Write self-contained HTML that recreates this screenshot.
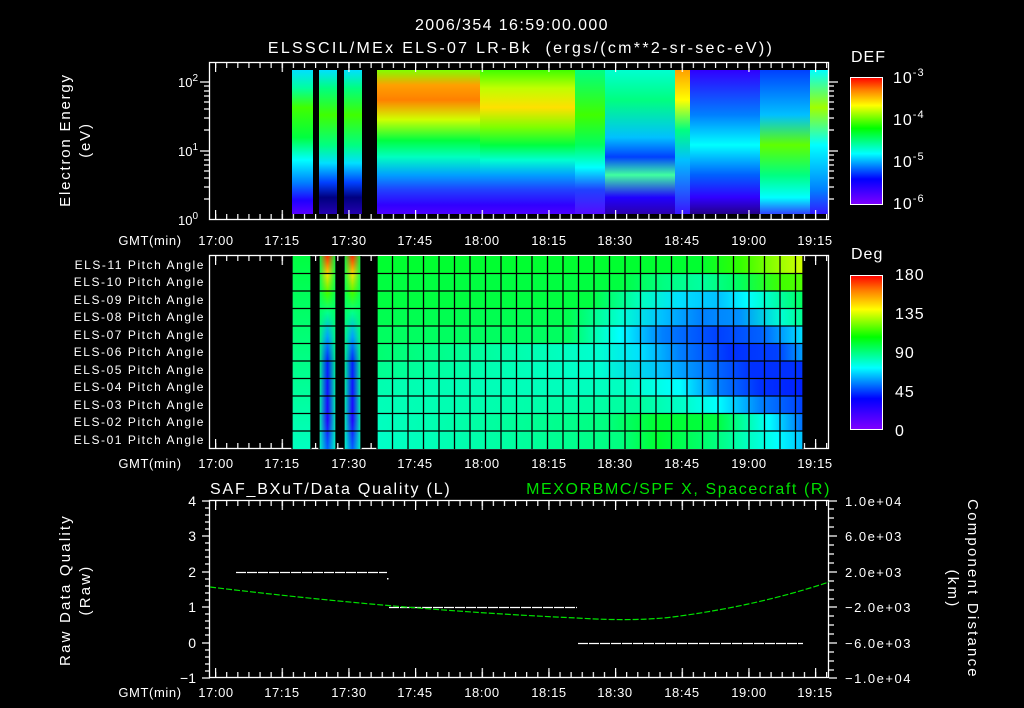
<!DOCTYPE html>
<html><head><meta charset="utf-8"><style>
html,body{margin:0;padding:0;background:#000;}
svg{display:block;}
text{font-family:"Liberation Sans",sans-serif;fill:#fff;}
</style></head><body>
<svg width="1024" height="708" viewBox="0 0 1024 708" xmlns="http://www.w3.org/2000/svg">
<defs>
<pattern id="tk" x="215" y="0" width="11.11" height="708" patternUnits="userSpaceOnUse"><rect x="0" y="0" width="1.2" height="708" fill="#fff"/></pattern>
<pattern id="tkM" x="215" y="0" width="66.67" height="708" patternUnits="userSpaceOnUse"><rect x="0" y="0" width="1.2" height="708" fill="#fff"/></pattern>
<linearGradient id="cb" x1="0" y1="1" x2="0" y2="0"><stop offset="0" stop-color="#8000ff"/><stop offset=".2" stop-color="#0000ff"/><stop offset=".4" stop-color="#00ffff"/><stop offset=".6" stop-color="#00ff00"/><stop offset=".78" stop-color="#ffff00"/><stop offset=".9" stop-color="#ff8000"/><stop offset="1" stop-color="#ff0000"/></linearGradient>
<linearGradient id="gA" x1="0" y1="70" x2="0" y2="220" gradientUnits="userSpaceOnUse"><stop offset="0" stop-color="#00e0ff"/><stop offset=".12" stop-color="#00ffa0"/><stop offset=".25" stop-color="#40ff00"/><stop offset=".45" stop-color="#00ff40"/><stop offset=".6" stop-color="#00ffff"/><stop offset=".75" stop-color="#0080ff"/><stop offset=".87" stop-color="#2000ff"/><stop offset="1" stop-color="#7000ff"/></linearGradient>
<linearGradient id="gA2" x1="0" y1="70" x2="0" y2="220" gradientUnits="userSpaceOnUse"><stop offset="0" stop-color="#00e0ff"/><stop offset=".12" stop-color="#00ff80"/><stop offset=".3" stop-color="#40ff00"/><stop offset=".5" stop-color="#00ff80"/><stop offset=".62" stop-color="#00e0ff"/><stop offset=".75" stop-color="#0040ff"/><stop offset=".85" stop-color="#000080"/><stop offset="1" stop-color="#3000c0"/></linearGradient>
<linearGradient id="gB" x1="0" y1="70" x2="0" y2="220" gradientUnits="userSpaceOnUse"><stop offset="0" stop-color="#80ff00"/><stop offset=".1" stop-color="#ffa000"/><stop offset=".2" stop-color="#ff8000"/><stop offset=".33" stop-color="#d0ff00"/><stop offset=".47" stop-color="#00ff40"/><stop offset=".58" stop-color="#00ffc0"/><stop offset=".7" stop-color="#00a0ff"/><stop offset=".8" stop-color="#2040ff"/><stop offset=".9" stop-color="#3000ff"/><stop offset="1" stop-color="#6000ff"/></linearGradient>
<linearGradient id="gB2" x1="0" y1="70" x2="0" y2="220" gradientUnits="userSpaceOnUse"><stop offset="0" stop-color="#40ff00"/><stop offset=".12" stop-color="#c0ff00"/><stop offset=".25" stop-color="#ffe000"/><stop offset=".38" stop-color="#80ff00"/><stop offset=".5" stop-color="#00ff40"/><stop offset=".6" stop-color="#00ffd0"/><stop offset=".7" stop-color="#00a0ff"/><stop offset=".8" stop-color="#2040ff"/><stop offset=".9" stop-color="#3000ff"/><stop offset="1" stop-color="#6000ff"/></linearGradient>
<linearGradient id="gC" x1="0" y1="70" x2="0" y2="220" gradientUnits="userSpaceOnUse"><stop offset="0" stop-color="#00ff80"/><stop offset=".3" stop-color="#40ff00"/><stop offset=".5" stop-color="#00ff60"/><stop offset=".65" stop-color="#00ffff"/><stop offset=".8" stop-color="#2040ff"/><stop offset="1" stop-color="#6000ff"/></linearGradient>
<linearGradient id="gD" x1="0" y1="70" x2="0" y2="220" gradientUnits="userSpaceOnUse"><stop offset="0" stop-color="#00ffd0"/><stop offset=".2" stop-color="#00ff80"/><stop offset=".45" stop-color="#00c0ff"/><stop offset=".58" stop-color="#0040ff"/><stop offset=".7" stop-color="#40ffa0"/><stop offset=".85" stop-color="#2000ff"/><stop offset="1" stop-color="#300090"/></linearGradient>
<linearGradient id="gE" x1="0" y1="70" x2="0" y2="220" gradientUnits="userSpaceOnUse"><stop offset="0" stop-color="#ffa000"/><stop offset=".2" stop-color="#ffff00"/><stop offset=".4" stop-color="#00ff80"/><stop offset=".6" stop-color="#00c0ff"/><stop offset="1" stop-color="#4000ff"/></linearGradient>
<linearGradient id="gF" x1="0" y1="70" x2="0" y2="220" gradientUnits="userSpaceOnUse"><stop offset="0" stop-color="#3000ff"/><stop offset=".3" stop-color="#0080ff"/><stop offset=".5" stop-color="#00ffff"/><stop offset=".7" stop-color="#0060ff"/><stop offset=".85" stop-color="#3000ff"/><stop offset="1" stop-color="#200060"/></linearGradient>
<linearGradient id="gG" x1="0" y1="70" x2="0" y2="220" gradientUnits="userSpaceOnUse"><stop offset="0" stop-color="#0040ff"/><stop offset=".3" stop-color="#00c0ff"/><stop offset=".5" stop-color="#60ff00"/><stop offset=".7" stop-color="#00ff80"/><stop offset=".85" stop-color="#00ffff"/><stop offset="1" stop-color="#4000ff"/></linearGradient>
<linearGradient id="gH" x1="0" y1="70" x2="0" y2="220" gradientUnits="userSpaceOnUse"><stop offset="0" stop-color="#00ffff"/><stop offset=".25" stop-color="#a0ff00"/><stop offset=".5" stop-color="#00ffff"/><stop offset=".8" stop-color="#0080ff"/><stop offset="1" stop-color="#4000ff"/></linearGradient>
<linearGradient id="r0" x1="377" x2="803" gradientUnits="userSpaceOnUse"><stop offset="0" stop-color="#00ff30"/><stop offset=".76" stop-color="#00ff30"/><stop offset=".85" stop-color="#30ff00"/><stop offset=".95" stop-color="#a0ff00"/><stop offset="1" stop-color="#d0ff00"/></linearGradient>
<linearGradient id="r1" x1="377" x2="803" gradientUnits="userSpaceOnUse"><stop offset="0" stop-color="#00ff40"/><stop offset=".57" stop-color="#00ff40"/><stop offset=".67" stop-color="#00ff80"/><stop offset=".76" stop-color="#00ffa0"/><stop offset=".85" stop-color="#00ff60"/><stop offset=".95" stop-color="#40ff00"/><stop offset="1" stop-color="#50ff00"/></linearGradient>
<linearGradient id="r2" x1="377" x2="803" gradientUnits="userSpaceOnUse"><stop offset="0" stop-color="#00ff40"/><stop offset=".5" stop-color="#00ff40"/><stop offset=".62" stop-color="#00ffc0"/><stop offset=".71" stop-color="#00e0ff"/><stop offset=".8" stop-color="#00c0ff"/><stop offset=".87" stop-color="#00ffff"/><stop offset="1" stop-color="#00ff60"/></linearGradient>
<linearGradient id="r3" x1="377" x2="803" gradientUnits="userSpaceOnUse"><stop offset="0" stop-color="#00ff50"/><stop offset=".45" stop-color="#00ff50"/><stop offset=".57" stop-color="#00ffd0"/><stop offset=".67" stop-color="#00c0ff"/><stop offset=".76" stop-color="#0080ff"/><stop offset=".85" stop-color="#0090ff"/><stop offset=".95" stop-color="#00ffd0"/><stop offset="1" stop-color="#00ff90"/></linearGradient>
<linearGradient id="r4" x1="377" x2="803" gradientUnits="userSpaceOnUse"><stop offset="0" stop-color="#00ff60"/><stop offset=".45" stop-color="#00ff60"/><stop offset=".57" stop-color="#00ffff"/><stop offset=".67" stop-color="#0080ff"/><stop offset=".8" stop-color="#0040ff"/><stop offset=".9" stop-color="#0060ff"/><stop offset="1" stop-color="#00e0ff"/></linearGradient>
<linearGradient id="r5" x1="377" x2="803" gradientUnits="userSpaceOnUse"><stop offset="0" stop-color="#00ff70"/><stop offset=".52" stop-color="#00ffd0"/><stop offset=".62" stop-color="#00e0ff"/><stop offset=".71" stop-color="#0080ff"/><stop offset=".83" stop-color="#0030ff"/><stop offset=".94" stop-color="#0040ff"/><stop offset="1" stop-color="#00a0ff"/></linearGradient>
<linearGradient id="r6" x1="377" x2="803" gradientUnits="userSpaceOnUse"><stop offset="0" stop-color="#00ff90"/><stop offset=".52" stop-color="#00ffd0"/><stop offset=".67" stop-color="#00c0ff"/><stop offset=".76" stop-color="#0080ff"/><stop offset=".88" stop-color="#0030ff"/><stop offset="1" stop-color="#0030ff"/></linearGradient>
<linearGradient id="r7" x1="377" x2="803" gradientUnits="userSpaceOnUse"><stop offset="0" stop-color="#00ffb0"/><stop offset=".57" stop-color="#00ffc0"/><stop offset=".71" stop-color="#00ffff"/><stop offset=".8" stop-color="#0080ff"/><stop offset=".9" stop-color="#0030ff"/><stop offset="1" stop-color="#0020ff"/></linearGradient>
<linearGradient id="r8" x1="377" x2="803" gradientUnits="userSpaceOnUse"><stop offset="0" stop-color="#00ffb8"/><stop offset=".62" stop-color="#00ffa0"/><stop offset=".73" stop-color="#00ffd0"/><stop offset=".8" stop-color="#00ffff"/><stop offset=".9" stop-color="#0080ff"/><stop offset="1" stop-color="#0040ff"/></linearGradient>
<linearGradient id="r9" x1="377" x2="803" gradientUnits="userSpaceOnUse"><stop offset="0" stop-color="#00ffc0"/><stop offset=".54" stop-color="#00ff80"/><stop offset=".66" stop-color="#00ff30"/><stop offset=".8" stop-color="#00ff40"/><stop offset=".92" stop-color="#00ffff"/><stop offset="1" stop-color="#0070ff"/></linearGradient>
<linearGradient id="r10" x1="377" x2="803" gradientUnits="userSpaceOnUse"><stop offset="0" stop-color="#00ffc8"/><stop offset=".57" stop-color="#00ff80"/><stop offset=".66" stop-color="#00ff30"/><stop offset=".8" stop-color="#00ff80"/><stop offset=".94" stop-color="#00ffff"/><stop offset="1" stop-color="#00c0ff"/></linearGradient>
<linearGradient id="nc" x1="0" y1="255" x2="0" y2="449" gradientUnits="userSpaceOnUse"><stop offset="0" stop-color="#ff2000"/><stop offset=".1" stop-color="#ffe000"/><stop offset=".2" stop-color="#40ff00"/><stop offset=".3" stop-color="#00ff90"/><stop offset=".42" stop-color="#00a0ff"/><stop offset=".55" stop-color="#0020ff"/><stop offset=".85" stop-color="#2000ff"/><stop offset="1" stop-color="#0060ff"/></linearGradient>
<linearGradient id="ncm" x1="0" y1="0" x2="1" y2="0"><stop offset="0" stop-color="#fff" stop-opacity="0"/><stop offset=".5" stop-color="#fff" stop-opacity="1"/><stop offset="1" stop-color="#fff" stop-opacity="0"/></linearGradient>
<mask id="mk1" maskUnits="userSpaceOnUse" x="0" y="0" width="1024" height="708"><rect x="319" y="256" width="17" height="193" fill="url(#ncm)"/><rect x="344" y="256" width="17" height="193" fill="url(#ncm)"/></mask>
<linearGradient id="ea" x1="0" y1="255" x2="0" y2="449" gradientUnits="userSpaceOnUse"><stop offset="0" stop-color="#00ff40"/><stop offset=".5" stop-color="#00ff80"/><stop offset="1" stop-color="#00ffc0"/></linearGradient>
</defs>

<!-- titles -->
<text x="512" y="30" font-size="16" letter-spacing="1.4" text-anchor="middle">2006/354 16:59:00.000</text>
<text x="521" y="53" font-size="16" letter-spacing="2.3" text-anchor="middle" xml:space="preserve">ELSSCIL/MEx ELS-07 LR-Bk  (ergs/(cm**2-sr-sec-eV))</text>

<!-- TOP PANEL -->
<rect x="292" y="70" width="21" height="144" fill="url(#gA)"/>
<rect x="319" y="70" width="18" height="144" fill="url(#gA2)"/>
<rect x="344" y="70" width="18" height="144" fill="url(#gA2)"/>
<rect x="377" y="70" width="103" height="144" fill="url(#gB)"/>
<rect x="480" y="70" width="95" height="144" fill="url(#gB2)"/>
<rect x="575" y="70" width="30" height="144" fill="url(#gC)"/>
<rect x="605" y="70" width="70" height="144" fill="url(#gD)"/>
<rect x="675" y="70" width="15" height="144" fill="url(#gE)"/>
<rect x="690" y="70" width="70" height="144" fill="url(#gF)"/>
<rect x="760" y="70" width="50" height="144" fill="url(#gG)"/>
<rect x="810" y="70" width="19" height="144" fill="url(#gH)"/>
<g fill="none" stroke="#fff" stroke-width="1.3">
<rect x="209.5" y="62.5" width="619" height="157"/>
<rect x="209.5" y="255.5" width="619" height="193"/>
<rect x="209.5" y="500.5" width="619" height="177"/>
</g>
<rect x="210" y="63" width="618" height="5" fill="url(#tk)"/>
<rect x="210" y="214" width="618" height="5" fill="url(#tk)"/>
<rect x="210" y="63" width="618" height="9" fill="url(#tkM)"/>
<rect x="210" y="210" width="618" height="9" fill="url(#tkM)"/>
<rect x="210" y="256" width="618" height="5" fill="url(#tk)"/>
<rect x="210" y="443" width="618" height="5" fill="url(#tk)"/>
<rect x="210" y="256" width="618" height="9" fill="url(#tkM)"/>
<rect x="210" y="439" width="618" height="9" fill="url(#tkM)"/>
<rect x="210" y="501" width="618" height="5" fill="url(#tk)"/>
<rect x="210" y="672" width="618" height="5" fill="url(#tk)"/>
<rect x="210" y="501" width="618" height="9" fill="url(#tkM)"/>
<rect x="210" y="668" width="618" height="9" fill="url(#tkM)"/>
<g stroke="#fff" stroke-width="1.2">
<path d="M200 82H209M200 151H209M204 130H209M204 118H209M204 109H209M204 102H209M204 96H209M204 91H209M204 86H209M204 199H209M204 187H209M204 178H209M204 171H209M204 165H209M204 160H209M204 155H209"/>
<path d="M829 82H838M829 151H838M829 130H834M829 118H834M829 109H834M829 102H834M829 96H834M829 91H834M829 86H834M829 199H834M829 187H834M829 178H834M829 171H834M829 165H834M829 160H834M829 155H834"/>
</g>
<text x="198" y="87" font-size="13" text-anchor="end">10<tspan dy="-6" font-size="10">2</tspan></text>
<text x="198" y="156" font-size="13" text-anchor="end">10<tspan dy="-6" font-size="10">1</tspan></text>
<text x="198" y="225" font-size="13" text-anchor="end">10<tspan dy="-6" font-size="10">0</tspan></text>
<text transform="translate(70,140) rotate(-90)" font-size="15" letter-spacing="1.8" text-anchor="middle">Electron Energy</text>
<text transform="translate(90,140) rotate(-90)" font-size="15" letter-spacing="1.8" text-anchor="middle">(eV)</text>

<g font-size="13" letter-spacing="0.6" text-anchor="middle">
<text x="150" y="245">GMT(min)</text>
<text x="216" y="245">17:00</text><text x="282" y="245">17:15</text><text x="349" y="245">17:30</text><text x="415" y="245">17:45</text><text x="482" y="245">18:00</text><text x="549" y="245">18:15</text><text x="615" y="245">18:30</text><text x="682" y="245">18:45</text><text x="749" y="245">19:00</text><text x="815" y="245">19:15</text>
<text x="150" y="468">GMT(min)</text>
<text x="216" y="468">17:00</text><text x="282" y="468">17:15</text><text x="349" y="468">17:30</text><text x="415" y="468">17:45</text><text x="482" y="468">18:00</text><text x="549" y="468">18:15</text><text x="615" y="468">18:30</text><text x="682" y="468">18:45</text><text x="749" y="468">19:00</text><text x="815" y="468">19:15</text>
<text x="150" y="697">GMT(min)</text>
<text x="216" y="697">17:00</text><text x="282" y="697">17:15</text><text x="349" y="697">17:30</text><text x="415" y="697">17:45</text><text x="482" y="697">18:00</text><text x="549" y="697">18:15</text><text x="615" y="697">18:30</text><text x="682" y="697">18:45</text><text x="749" y="697">19:00</text><text x="815" y="697">19:15</text>
</g>

<!-- colorbars -->
<text x="851" y="62" font-size="16" letter-spacing="1">DEF</text>
<rect x="850.5" y="77.5" width="32" height="127" fill="url(#cb)" stroke="#fff"/>
<g font-size="16" letter-spacing="1"><text x="893" y="83">10<tspan dy="-7" font-size="11">-3</tspan></text>
<text x="893" y="125">10<tspan dy="-7" font-size="11">-4</tspan></text>
<text x="893" y="167">10<tspan dy="-7" font-size="11">-5</tspan></text>
<text x="893" y="209">10<tspan dy="-7" font-size="11">-6</tspan></text></g>
<text x="851" y="259" font-size="16" letter-spacing="1">Deg</text>
<rect x="850.5" y="275.5" width="32" height="154" fill="url(#cb)" stroke="#fff"/>
<g font-size="16" letter-spacing="1"><text x="895" y="280">180</text><text x="895" y="319">135</text><text x="895" y="358">90</text><text x="895" y="397">45</text><text x="895" y="436">0</text></g>

<!-- MIDDLE PANEL -->
<rect x="292" y="256" width="19" height="193" fill="url(#ea)"/>
<rect x="319" y="256" width="17" height="193" fill="url(#ea)"/>
<rect x="344" y="256" width="17" height="193" fill="url(#ea)"/>
<g mask="url(#mk1)"><rect x="319" y="256" width="17" height="193" fill="url(#nc)"/><rect x="344" y="256" width="17" height="193" fill="url(#nc)"/></g>
<g>
<rect x="377" y="256" width="426" height="18" fill="url(#r0)"/>
<rect x="377" y="274" width="426" height="18" fill="url(#r1)"/>
<rect x="377" y="291" width="426" height="18" fill="url(#r2)"/>
<rect x="377" y="309" width="426" height="18" fill="url(#r3)"/>
<rect x="377" y="326" width="426" height="18" fill="url(#r4)"/>
<rect x="377" y="344" width="426" height="18" fill="url(#r5)"/>
<rect x="377" y="361" width="426" height="18" fill="url(#r6)"/>
<rect x="377" y="379" width="426" height="18" fill="url(#r7)"/>
<rect x="377" y="396" width="426" height="18" fill="url(#r8)"/>
<rect x="377" y="414" width="426" height="18" fill="url(#r9)"/>
<rect x="377" y="431" width="426" height="18" fill="url(#r10)"/>
</g>
<g stroke="#000" stroke-width="1.3">
<path d="M292 273.5H803M292 291H803M292 308.5H803M292 326H803M292 343.5H803M292 361H803M292 378.5H803M292 396H803M292 413.5H803M292 431H803"/>
<path d="M377 256V449M392.5 256V449M408 256V449M423.5 256V449M439 256V449M454.5 256V449M470 256V449M485.5 256V449M501 256V449M516.5 256V449M532 256V449M547.5 256V449M563 256V449M578.5 256V449M594 256V449M609.5 256V449M625 256V449M640.5 256V449M656 256V449M671.5 256V449M687 256V449M702.5 256V449M718 256V449M733.5 256V449M749 256V449M764.5 256V449M780 256V449M795.5 256V449M803 256V449M292 256V449M311 256V449M319 256V449M336 256V449M344 256V449M361 256V449"/>
</g>
<g font-size="12" letter-spacing="1.55" text-anchor="end">
<text x="205" y="269">ELS-11 Pitch Angle</text>
<text x="205" y="286">ELS-10 Pitch Angle</text>
<text x="205" y="304">ELS-09 Pitch Angle</text>
<text x="205" y="321">ELS-08 Pitch Angle</text>
<text x="205" y="339">ELS-07 Pitch Angle</text>
<text x="205" y="356">ELS-06 Pitch Angle</text>
<text x="205" y="374">ELS-05 Pitch Angle</text>
<text x="205" y="391">ELS-04 Pitch Angle</text>
<text x="205" y="409">ELS-03 Pitch Angle</text>
<text x="205" y="426">ELS-02 Pitch Angle</text>
<text x="205" y="444">ELS-01 Pitch Angle</text>
</g>

<!-- BOTTOM PANEL -->
<text x="210" y="494" font-size="16" letter-spacing="1.8">SAF_BXuT/Data Quality (L)</text>
<text x="831" y="494" font-size="16" letter-spacing="1.6" text-anchor="end" style="fill:#00e000">MEXORBMC/SPF X, Spacecraft (R)</text>
<g stroke="#fff" stroke-width="1.2">
<path d="M202 501H210M202 536H210M202 572H210M202 607H210M202 643H210M202 678H210M205 508H210M205 515H210M205 522H210M205 529H210M205 543H210M205 550H210M205 557H210M205 564H210M205 579H210M205 586H210M205 593H210M205 600H210M205 614H210M205 621H210M205 628H210M205 635H210M205 650H210M205 657H210M205 664H210M205 671H210"/>
<path d="M829 501H837M829 536H837M829 572H837M829 607H837M829 643H837M829 678H837M829 509H834M829 518H834M829 527H834M829 545H834M829 554H834M829 563H834M829 581H834M829 590H834M829 599H834M829 616H834M829 625H834M829 634H834M829 652H834M829 661H834M829 670H834"/>
</g>
<g font-size="14" text-anchor="end"><text x="196" y="506">4</text><text x="196" y="541">3</text><text x="196" y="577">2</text><text x="196" y="612">1</text><text x="196" y="648">0</text><text x="196" y="683">−1</text></g>
<g font-size="13" letter-spacing="1.5"><text x="845" y="506">1.0e+04</text><text x="845" y="541">6.0e+03</text><text x="845" y="577">2.0e+03</text><text x="845" y="612">−2.0e+03</text><text x="845" y="648">−6.0e+03</text><text x="845" y="683">−1.0e+04</text></g>
<text transform="translate(70,590) rotate(-90)" font-size="15" letter-spacing="2.2" text-anchor="middle">Raw Data Quality</text>
<text transform="translate(90,590) rotate(-90)" font-size="15" letter-spacing="2.2" text-anchor="middle">(Raw)</text>
<text transform="translate(968,589) rotate(90)" font-size="15" letter-spacing="2.2" text-anchor="middle">Component Distance</text>
<text transform="translate(948,589) rotate(90)" font-size="15" letter-spacing="2.2" text-anchor="middle">(km)</text>
<g stroke="#fff" stroke-width="1.2" stroke-dasharray="10 1">
<path d="M236 572.5H387M389 607.5H577M578 643.5H803"/>
</g>
<rect x="387" y="578" width="1.5" height="1.5" fill="#fff"/>
<path d="M210 587 Q400 610 577 618 Q640 622 680 616 Q760 605 829 582" fill="none" stroke="#00e000" stroke-width="1.2" stroke-dasharray="6 2"/>
</svg>
</body></html>
